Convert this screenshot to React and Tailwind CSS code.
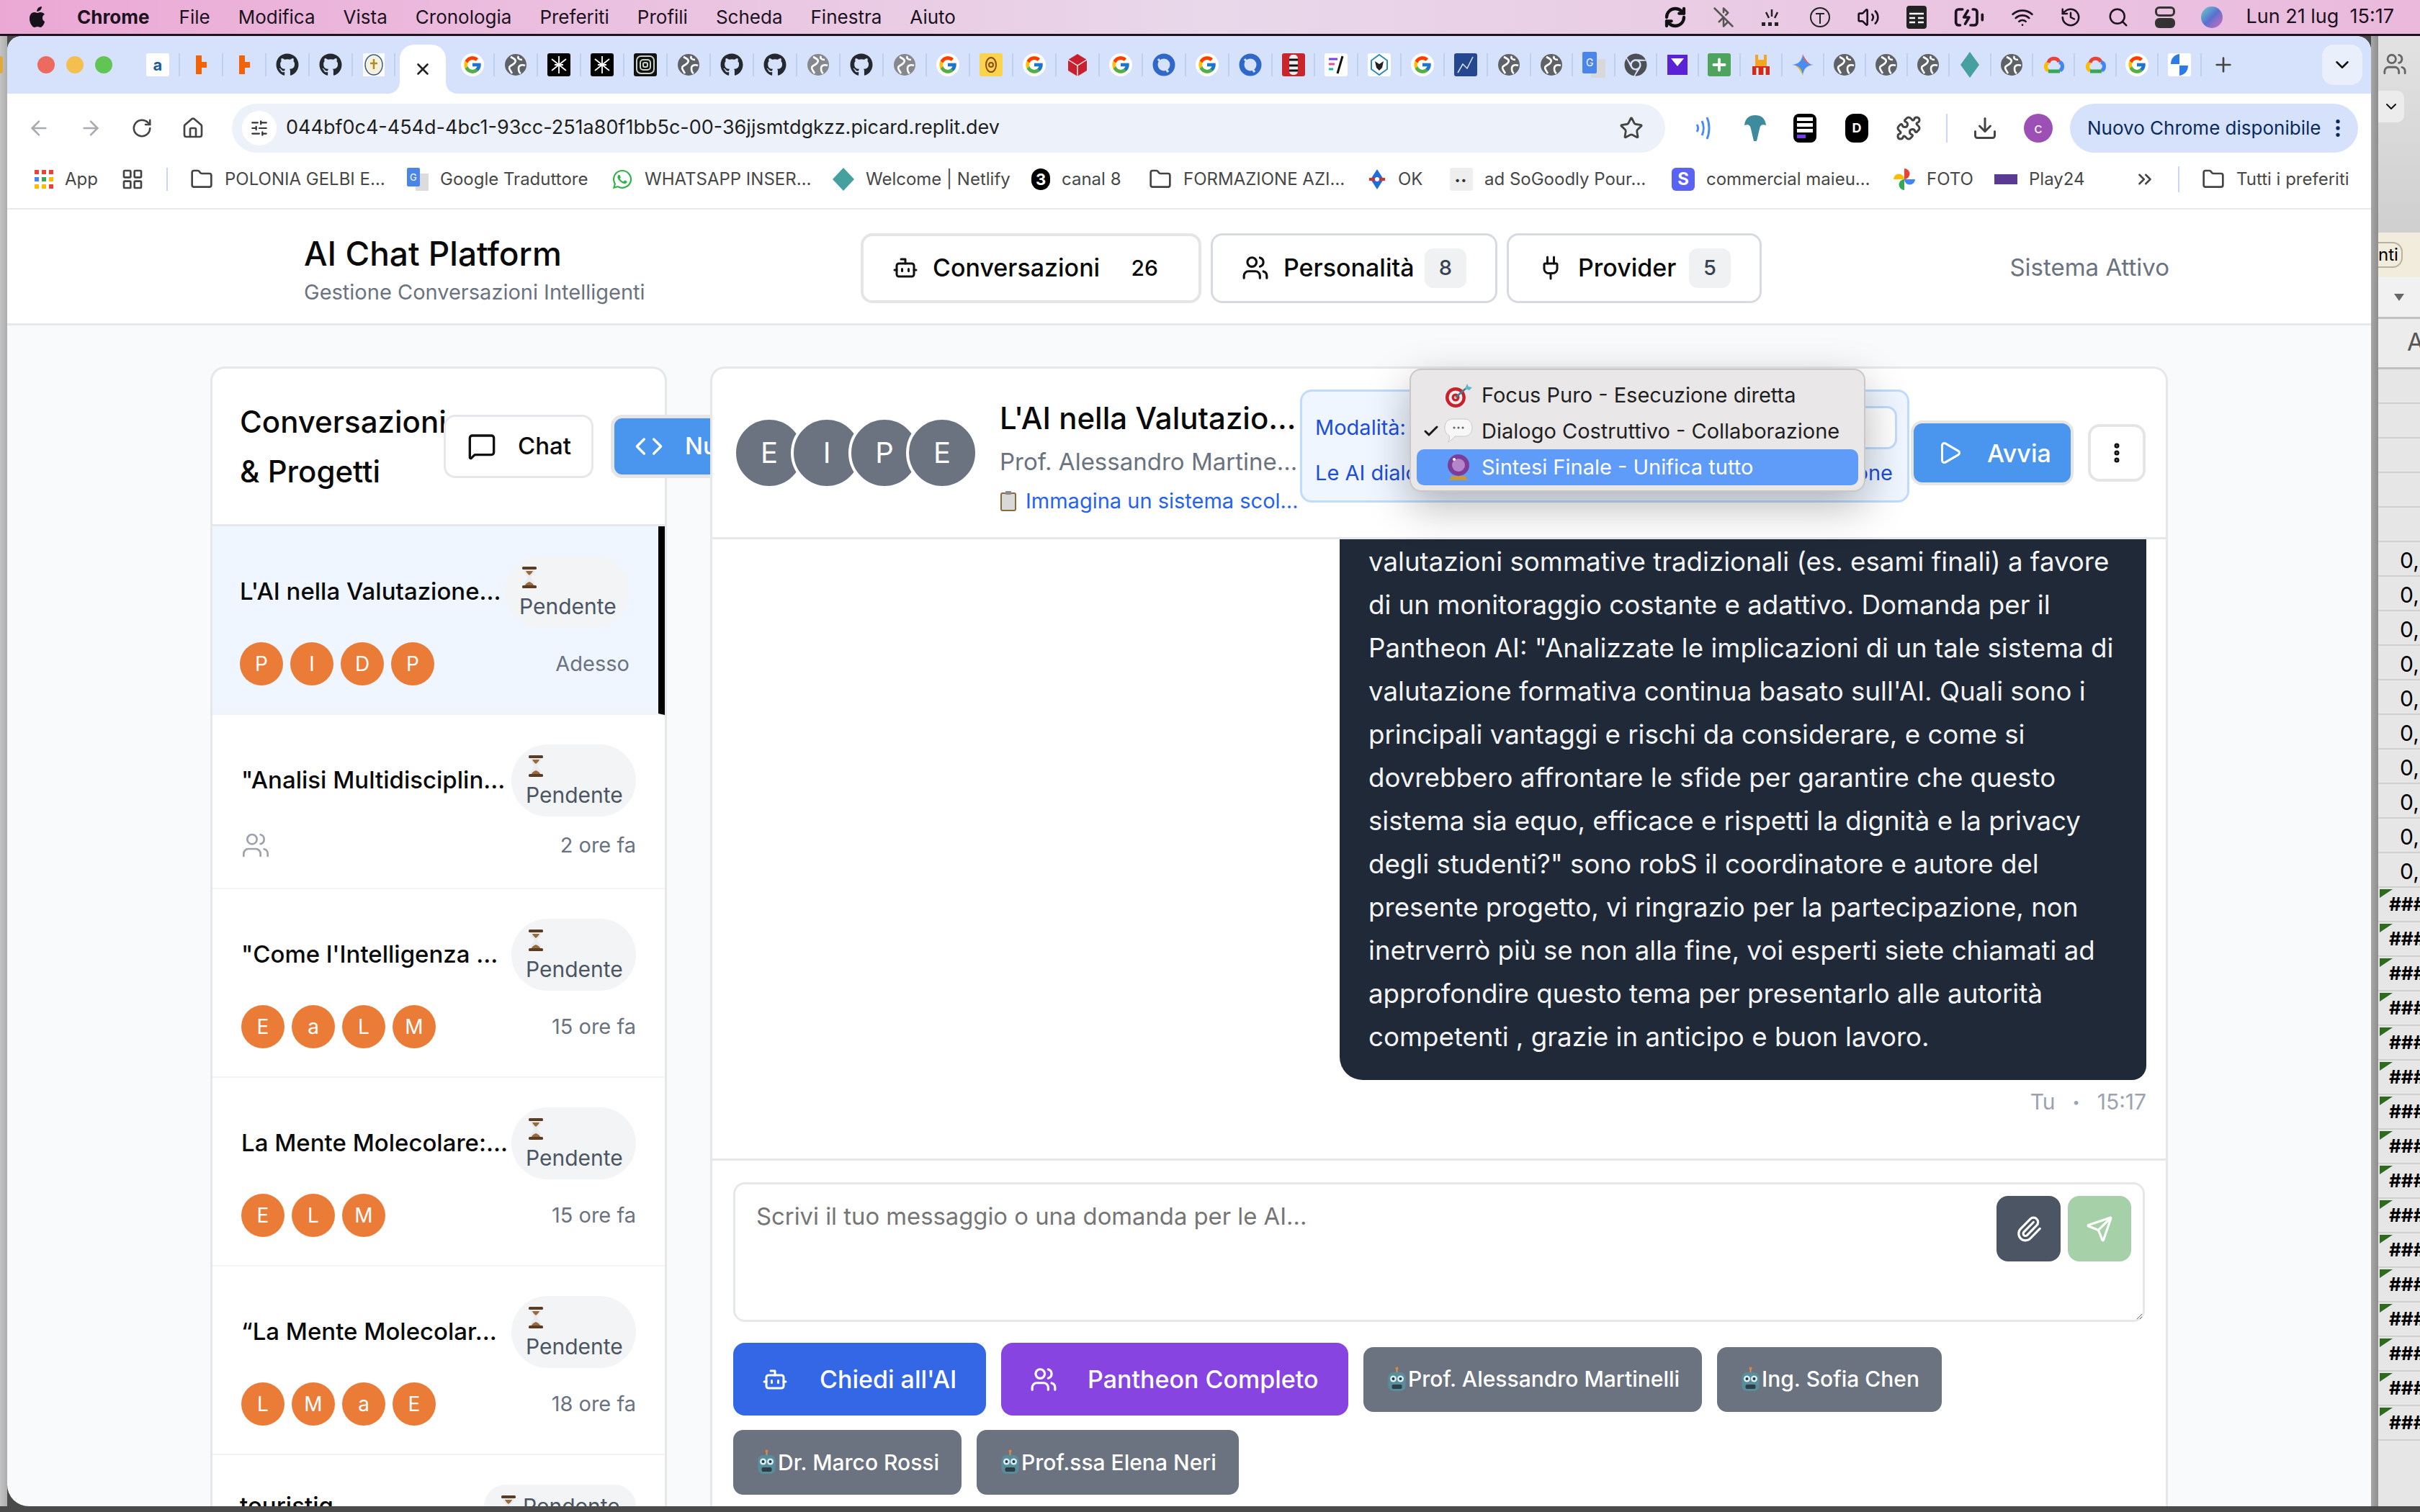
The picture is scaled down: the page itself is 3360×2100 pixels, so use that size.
import {
  ArrowLeft, ArrowRight, RotateCw, House, Star, Puzzle, Download, EllipsisVertical, ChevronDown, ChevronsRight, Plus, X,
  Folder, LayoutGrid, Bot, Users, Plug, MessageSquare, Code, Play, Paperclip, Send, Check, SlidersHorizontal,
  BluetoothOff, Volume2, Wifi, History, Search, BatteryCharging, RefreshCw,
} from 'lucide-react'
import { FcGoogle } from 'react-icons/fc'
import { FaGithub, FaChrome, FaWhatsapp } from 'react-icons/fa'

function Globe({ light }) {
  return (
    <svg width="32" height="32" viewBox="0 0 32 32">
      <circle cx="16" cy="16" r="15" fill={light ? '#85888d' : '#5f6368'} />
      <path d="M9 5c6 3 9 5 5 9s-9 3-6 9l3 5M20 4c-2 3 1 5 5 5M29 17c-5-2-9 0-9 4s1 6 3 7" fill="none" stroke="#fff" strokeWidth="2.6" />
    </svg>
  )
}

function GoogleIcon() {
  return (
    <span className="flex h-[32px] w-[32px] items-center justify-center rounded-full bg-white">
      <FcGoogle size={28} />
    </span>
  )
}

function Glyph({ bg, children, color = '#fff', round }) {
  return (
    <span className={`flex h-[32px] w-[32px] items-center justify-center overflow-hidden text-[22px] font-bold ${round ? 'rounded-full' : 'rounded-[3px]'}`} style={{ background: bg, color }}>
      {children}
    </span>
  )
}

const gh = <FaGithub size={32} color="#24292f" />
const g = <GoogleIcon />
const gl = <Globe />
const gll = <Globe light />
const rep = <svg width="32" height="32" viewBox="0 0 32 32"><path d="M9 3h8v9h7v8h-7v9H9z" fill="#f26207" /></svg>
const burst = <Glyph bg="#000"><svg width="28" height="28" viewBox="0 0 28 28" stroke="#fff" strokeWidth="1.8"><path d="M14 2v24M4 6l20 16M24 6L4 22M8 14h12" /></svg></Glyph>
const rings = <Glyph bg="#111"><svg width="30" height="30" viewBox="0 0 30 30" fill="none" stroke="#c8d2c8" strokeWidth="2"><rect x="3" y="3" width="24" height="24" rx="6" /><rect x="8" y="8" width="14" height="14" rx="4" /><rect x="12" y="12" width="6" height="6" rx="2" /></svg></Glyph>
const cloud = <svg width="32" height="32" viewBox="0 0 32 32" fill="none" strokeWidth="5"><path d="M9 24a6 6 0 0 1 0-11" stroke="#fbbc04" /><path d="M9 13a8 8 0 0 1 15-1" stroke="#ea4335" /><path d="M24 12a6.5 6.5 0 0 1 1 12" stroke="#4285f4" /><path d="M25 25H9" stroke="#34a853" /></svg>
const oval = <svg width="32" height="32" viewBox="0 0 32 32"><circle cx="16" cy="16" r="12" fill="none" stroke="#2f68c8" strokeWidth="7" /><path d="M8 8l14 18" stroke="#d6e2fb" strokeWidth="3" /></svg>

const TABS = [
  [60, <Glyph bg="#fff" color="#1f5c99">a</Glyph>], [60, rep], [60, rep], [60, gh], [60, gh],
  [59, <svg width="30" height="32" viewBox="0 0 30 32"><rect width="30" height="32" fill="#fff" /><ellipse cx="15" cy="16" rx="12" ry="14" fill="#f4f2dc" stroke="#3a5a8c" strokeWidth="1.5" /><path d="M15 8v14M10 14h10" stroke="#b08c2c" strokeWidth="2.5" /></svg>],
  'active',
  [60, g], [60, gl], [60, burst], [60, burst], [60, rings], [60, gl], [60, gh], [60, gh], [60, gll], [60, gh], [60, gll], [60, g],
  [60, <Glyph bg="#fbd34d"><svg width="20" height="26" viewBox="0 0 20 26" fill="none" stroke="#8a4b12" strokeWidth="2"><ellipse cx="10" cy="13" rx="7" ry="10" /><circle cx="10" cy="13" r="3" /></svg></Glyph>],
  [60, g],
  [60, <svg width="32" height="32" viewBox="0 0 32 32"><path d="M16 1l13 8v15l-13 8-13-8V9z" fill="#c8202f" /><path d="M3 9l13 8 13-8M16 17v15" stroke="#fff" strokeWidth="1.4" fill="none" /></svg>],
  [60, g], [60, oval], [60, g], [60, oval],
  [59, <Glyph bg="#c9252c"><svg width="18" height="30" viewBox="0 0 18 30"><rect x="3" y="1" width="12" height="28" rx="5" fill="#eee" /><path d="M3 8h12M3 16h12M3 23h12" stroke="#111" strokeWidth="3" /></svg></Glyph>],
  [60, <Glyph bg="#fff"><svg width="26" height="30" viewBox="0 0 26 30" strokeWidth="3"><path d="M3 7h12" stroke="#7c3aed" /><path d="M3 14h8" stroke="#ec4899" /><path d="M3 21h6" stroke="#14b8a6" /><path d="M22 3l-7 24" stroke="#111" /></svg></Glyph>],
  [60, <Glyph bg="#fff"><svg width="28" height="32" viewBox="0 0 28 32" fill="none"><path d="M14 2l11 8v12l-11 8-11-8V10z" stroke="#2a8fb5" strokeWidth="2" /><path d="M8 11l6 4 6-4-2 9-4 4-4-4z" fill="#222" /></svg></Glyph>],
  [60, g],
  [60, <Glyph bg="#24478f"><svg width="30" height="30" viewBox="0 0 30 30" fill="none" stroke="#dce7f5" strokeWidth="1.5"><path d="M4 26l7-12 6 6 8-16" /></svg></Glyph>],
  [60, gl], [58, gl],
  [59, <svg width="32" height="36" viewBox="0 0 32 36"><rect x="12" y="10" width="20" height="26" fill="#d8d8d8" /><rect width="20" height="30" rx="2" fill="#4a85ea" /><text x="5" y="20" fontSize="14" fill="#fff">G</text></svg>],
  [58, <FaChrome size={32} color="#4c4f54" />],
  [58, <svg width="32" height="32" viewBox="0 0 32 32"><rect x="2" y="2" width="28" height="28" fill="#5b21d6" /><path d="M7 7h18l-9 11z" fill="#fff" /></svg>],
  [58, <Glyph bg="#4ea35d"><Plus size={26} strokeWidth={3.5} /></Glyph>],
  [58, <svg width="32" height="32" viewBox="0 0 32 32"><path d="M8 2h4v7h8V2h4v16H8z" fill="#f5a51f" /><path d="M4 18h24v12H4z" fill="#d42a1e" /><path d="M11 20v10M21 20v10" stroke="#fff" strokeWidth="3" /></svg>],
  [58, <svg width="32" height="32" viewBox="0 0 32 32"><path d="M16 1c1 9 5 14 15 15-10 1-14 6-15 15-1-9-5-14-15-15 10-1 14-6 15-15z" fill="#4a8df0" /><path d="M16 1c1 9 5 14 15 15-7 0-12-8-15-15z" fill="#e8503f" /><path d="M16 31c-1-9-5-14-15-15 7 0 12 8 15 15z" fill="#f5b400" /></svg>],
  [58, gl], [58, gl], [58, gl],
  [58, <svg width="32" height="36" viewBox="0 0 32 36"><path d="M16 0l13 18-13 18L3 18z" fill="#46a09e" /></svg>],
  [58, gl], [58, cloud], [58, cloud], [58, g],
  [60, <Glyph bg="#fff"><svg width="30" height="32" viewBox="0 0 30 32"><path d="M15 1v14H3c0-8 5-13 12-14zM15 31V17h12c0 8-5 13-12 14z" fill="#2f7be5" /></svg></Glyph>],
]

const APPS_ICON = <svg width="26" height="26" viewBox="0 0 26 26"><g fill="#ea4335"><rect width="6" height="6" /><rect x="10" width="6" height="6" /><rect x="20" width="6" height="6" /></g><g fill="#4285f4"><rect y="10" width="6" height="6" /></g><g fill="#34a853"><rect x="10" y="10" width="6" height="6" /></g><g fill="#fbbc04"><rect x="20" y="10" width="6" height="6" /><rect y="20" width="6" height="6" /><rect x="10" y="20" width="6" height="6" /></g><rect x="20" y="20" width="6" height="6" fill="#ea4335" /></svg>

const MARKS = [
  { x: 'w-[301px]', icon: <Folder size={32} color="#444" />, label: 'POLONIA GELBI E…' },
  { x: 'w-[284px]', icon: <svg width="30" height="32" viewBox="0 0 30 32"><rect x="12" y="8" width="18" height="24" fill="#dcdcdc" /><rect width="18" height="26" rx="2" fill="#4a85ea" /><text x="4" y="18" fontSize="13" fill="#fff">G</text></svg>, label: 'Google Traduttore' },
  { x: 'w-[307px]', icon: <FaWhatsapp size={30} color="#30b34a" />, label: 'WHATSAPP INSER…' },
  { x: 'w-[276px]', icon: <svg width="30" height="32" viewBox="0 0 30 32"><path d="M15 0l15 16-15 16L0 16z" fill="#45a19e" /></svg>, label: 'Welcome | Netlify' },
  { x: 'w-[163px]', icon: <span className="flex h-[30px] w-[26px] items-center justify-center rounded-full bg-black text-[22px] font-bold leading-none text-white">3</span>, label: 'canal 8' },
  { x: 'w-[304px]', icon: <Folder size={32} color="#444" />, label: 'FORMAZIONE AZI…' },
  { x: 'w-[114px]', icon: <svg width="26" height="32" viewBox="0 0 26 32"><path d="M13 2l9 14-9 14L4 16z" fill="#1d6ed6" /><path d="M2 16h22" stroke="#d93025" strokeWidth="4" /><circle cx="13" cy="16" r="3" fill="#fff" /></svg>, label: 'OK' },
  { x: 'w-[308px]', icon: <Glyph bg="#eee" color="#333"><span className="text-[14px] tracking-[2px]">••</span></Glyph>, label: 'ad SoGoodly Pour…' },
  { x: 'w-[308px]', icon: <span className="flex h-[32px] w-[32px] items-center justify-center rounded-[6px] bg-[#5b63f5] text-[24px] font-bold text-white">S</span>, label: 'commercial maieu…' },
  { x: 'w-[140px]', icon: <svg width="30" height="32" viewBox="0 0 30 32"><path d="M15 16V1a7.5 7.5 0 0 1 0 15z" fill="#ea4335" /><path d="M15 16h15a7.5 7.5 0 0 1-15 0z" fill="#4285f4" /><path d="M15 16v15a7.5 7.5 0 0 1 0-15z" fill="#34a853" /><path d="M15 16H0a7.5 7.5 0 0 1 15 0z" fill="#fbbc04" /></svg>, label: 'FOTO' },
  { x: 'w-[161px]', icon: <span className="h-[14px] w-[32px] bg-[#5b3a94]" />, label: 'Play24' },
]

const RAIL_ZERO = Array.from({ length: 10 })
const RAIL_HASH = Array.from({ length: 16 })
const RAIL_BLANK = Array.from({ length: 5 })

const MESSAGE = [
  'valutazioni sommative tradizionali (es. esami finali) a favore',
  'di un monitoraggio costante e adattivo. Domanda per il',
  'Pantheon AI: "Analizzate le implicazioni di un tale sistema di',
  "valutazione formativa continua basato sull'AI. Quali sono i",
  'principali vantaggi e rischi da considerare, e come si',
  'dovrebbero affrontare le sfide per garantire che questo',
  'sistema sia equo, efficace e rispetti la dignità e la privacy',
  'degli studenti?" sono robS il coordinatore e autore del',
  'presente progetto, vi ringrazio per la partecipazione, non',
  'inetrverrò più se non alla fine, voi esperti siete chiamati ad',
  'approfondire questo tema per presentarlo alle autorità',
  'competenti , grazie in anticipo e buon lavoro.',
]

const CONVERSATIONS = [
  { title: '"Analisi Multidisciplin…', time: '2 ore fa', people: [] },
  { title: "\"Come l'Intelligenza …", time: '15 ore fa', people: ['E', 'a', 'L', 'M'] },
  { title: 'La Mente Molecolare:…', time: '15 ore fa', people: ['E', 'L', 'M'] },
  { title: '“La Mente Molecolar…', time: '18 ore fa', people: ['L', 'M', 'a', 'E'] },
]

function Hourglass() {
  return (
    <svg width="28" height="32" viewBox="0 0 28 32" className="block">
      <path d="M6 4h16c0 6-5 9-6 12 1 3 6 6 6 12H6c0-6 5-9 6-12-1-3-6-6-6-12z" fill="#e8ecef" />
      <path d="M9 7h10c-1 3-4 5-5 6-1-1-4-3-5-6zM8 27c1-3 4-4 6-5 2 1 5 2 6 5z" fill="#9a6a3c" />
      <rect x="4" y="1" width="20" height="4" rx="1.5" fill="#5b3b22" />
      <rect x="4" y="27" width="20" height="4" rx="1.5" fill="#5b3b22" />
    </svg>
  )
}

function RobotEmoji() {
  return (
    <svg width="31" height="36" viewBox="0 0 30 36" className="shrink-0">
      <path d="M15 1v7" stroke="#c49a5c" strokeWidth="2" />
      <circle cx="15" cy="2.5" r="2" fill="#e8803a" />
      <rect x="3" y="8" width="24" height="26" rx="7" fill="#5a8d9c" />
      <circle cx="10" cy="17" r="4.5" fill="#d8eef2" />
      <circle cx="20" cy="17" r="4.5" fill="#d8eef2" />
      <circle cx="10" cy="17" r="2" fill="#1d3a44" />
      <circle cx="20" cy="17" r="2" fill="#1d3a44" />
      <rect x="8" y="25" width="14" height="6" rx="2" fill="#2c3e46" />
    </svg>
  )
}

function Pill() {
  return (
    <div className="w-[173px] shrink-0 rounded-[50px] bg-[#f3f4f6] px-[20px] py-[10px] text-[30px] leading-[40px] text-[#4b5563]">
      <div className="flex h-[40px] items-center"><Hourglass /></div>
      <div>Pendente</div>
    </div>
  )
}

function Initials({ people }) {
  return (
    <div className="flex gap-[10px]">
      {people.map((p, i) => (
        <span key={i} className="flex h-[60px] w-[60px] items-center justify-center rounded-full bg-[#ea7c37] text-[28px] text-white">{p}</span>
      ))}
    </div>
  )
}

function ConversationRow({ c }) {
  return (
    <div className="border-b-2 border-[#f3f4f6] px-[40px] pt-[41px] pb-[39px]">
      <div className="flex items-center justify-between">
        <span className="whitespace-nowrap text-[33px] font-medium text-[#0a0a0a]">{c.title}</span>
        <Pill />
      </div>
      <div className="mt-[20px] flex h-[60px] items-center justify-between [&:has(svg)]:h-[40px]">
        {c.people.length ? <Initials people={c.people} /> : <Users size={40} color="#9ca3af" strokeWidth={1.6} />}
        <span className="text-[29px] text-[#6b7280]">{c.time}</span>
      </div>
    </div>
  )
}

function NavTab({ icon, label, badge, width, active }) {
  return (
    <div className={`flex h-[97px] items-center justify-between rounded-[16px] bg-white px-[40px] ${width} ${active ? 'border-[4px] border-[#e5e5e5]' : 'border-[3px] border-[#d7dae0]'}`}>
      <div className="flex items-center gap-[20px]">
        {icon}
        <span className="text-[34px] font-medium leading-[40px] text-[#0a0a0a]">{label}</span>
      </div>
      {active ? (
        <span className="px-[16px] text-[30px] font-medium text-[#0a0a0a]">{badge}</span>
      ) : (
        <span className="flex h-[55px] w-[58px] items-center justify-center rounded-[12px] bg-[#f0f1f3] text-[29px] font-medium text-[#374151]">{badge}</span>
      )}
    </div>
  )
}

function ModelButton({ label }) {
  return (
    <span className="flex h-[90px] items-center rounded-[14px] bg-[#6b7280] px-[31px] text-[30px] font-medium text-white">
      <RobotEmoji />{label}
    </span>
  )
}

function MenuBar() {
  const items = ['File', 'Modifica', 'Vista', 'Cronologia', 'Preferiti', 'Profili', 'Scheda', 'Finestra', 'Aiuto']
  return (
    <div className="flex h-[50px] items-center border-b-[3px] border-[#1f1320] bg-gradient-to-r from-[#eba8d5] via-[#e8d8ea] to-[#eab9dc] pl-[40px] pr-[36px] text-[26px] text-[#1c1220]">
      <svg width="26" height="32" viewBox="0 0 26 32" fill="#16101a" className="mr-[41px]">
        <path d="M19 17c0-4 3-5 3-5-2-3-5-3-6-3-2 0-3 1-4 1s-3-1-4-1C4 9 1 12 1 18c0 6 4 12 7 12 1 0 2-1 4-1s3 1 4 1c3 0 6-6 6-8-2-1-3-3-3-5zM16 6c1-1 2-3 2-5-2 0-4 1-5 2-1 1-2 3-2 5 2 0 4-1 5-2z" />
      </svg>
      <span className="mr-[41px] font-bold">Chrome</span>
      <div className="flex gap-[39px]">
        {items.map((m) => <span key={m}>{m}</span>)}
      </div>
      <div className="ml-auto flex items-center gap-[36px]">
        <RefreshCw size={32} strokeWidth={3.2} color="#111" />
        <BluetoothOff size={30} color="#555" />
        <svg width="32" height="30" viewBox="0 0 32 30" fill="#222"><rect x="2" y="22" width="5" height="5" /><rect x="11" y="22" width="5" height="5" /><rect x="20" y="22" width="5" height="5" /><path d="M8 8l4 8M16 4v10M24 8l-4 8" stroke="#222" strokeWidth="2.5" /></svg>
        <svg width="30" height="32" viewBox="0 0 30 32" fill="none" stroke="#222" strokeWidth="2"><circle cx="15" cy="16" r="13" /><path d="M9 11h12M15 11v14" /></svg>
        <Volume2 size={32} />
        <svg width="30" height="34" viewBox="0 0 30 34"><rect x="1" y="1" width="28" height="32" rx="4" fill="#222" /><path d="M5 12h20M5 18h8M5 24h8M17 18h8M17 24h8" stroke="#fff" strokeWidth="2.5" /></svg>
        <BatteryCharging size={44} />
        <Wifi size={32} />
        <History size={30} />
        <Search size={30} />
        <span className="flex h-[30px] w-[28px] flex-col gap-[2px]"><i className="h-[14px] rounded-[6px] border-[3px] border-[#333]" /><i className="h-[14px] rounded-[6px] bg-[#333]" /></span>
        <span className="h-[30px] w-[30px] rounded-full bg-gradient-to-br from-[#6dd0c4] via-[#5a6fd0] to-[#d067b8]" />
        <span className="ml-[-4px] whitespace-pre text-[27px]">Lun 21 lug  15:17</span>
      </div>
    </div>
  )
}

function ActiveTab() {
  return (
    <div className="relative ml-[6px] mr-[8px] flex h-[68px] w-[64px] items-center justify-center self-end rounded-t-[20px] bg-white">
      <svg width="16" height="16" viewBox="0 0 16 16" className="absolute bottom-0 left-[-16px]"><path d="M16 0v16H0c9 0 16-7 16-16z" fill="#fff" /></svg>
      <X size={26} color="#222" strokeWidth={2.4} />
      <svg width="16" height="16" viewBox="0 0 16 16" className="absolute bottom-0 right-[-16px]"><path d="M0 0v16h16C7 16 0 9 0 0z" fill="#fff" /></svg>
    </div>
  )
}

function BrowserChrome() {
  return (
    <>
      <div className="flex h-[80px] items-center bg-[#d6e2fb] pl-[42px]">
        <span className="h-[24px] w-[24px] rounded-full bg-[#ec6a5e]" />
        <span className="ml-[16px] h-[24px] w-[24px] rounded-full bg-[#f4bf4f]" />
        <span className="ml-[16px] h-[24px] w-[24px] rounded-full bg-[#61c554]" />
        <div className="ml-[34px] flex items-center self-stretch">
          {TABS.map((t, i) => t === 'active' ? (
            <ActiveTab key={i} />
          ) : (
            <div key={i} className="flex h-[32px] items-center justify-center border-r-2 border-[#bfcfee]" style={{ width: t[0] }}>{t[1]}</div>
          ))}
          <div className="flex w-[60px] justify-center"><Plus size={32} color="#444" /></div>
        </div>
        <div className="ml-auto mr-[12px] flex h-[56px] w-[56px] items-center justify-center rounded-[16px] bg-[#e9f0fc]">
          <ChevronDown size={30} color="#111" />
        </div>
      </div>
      <div className="flex h-[95px] items-center bg-white">
        <div className="flex w-[312px] items-center gap-[40px] pl-[28px]">
          <ArrowLeft size={32} color="#a8abb0" />
          <ArrowRight size={32} color="#a8abb0" />
          <RotateCw size={30} color="#444" />
          <House size={32} color="#444" />
        </div>
        <div className="flex h-[68px] w-[1990px] items-center rounded-full bg-[#edf2fa] pl-[14px] pr-[30px]">
          <span className="flex h-[48px] w-[48px] items-center justify-center rounded-full bg-white"><SlidersHorizontal size={26} color="#333" /></span>
          <span className="ml-[13px] text-[27px] text-[#1f1f1f]">044bf0c4-454d-4bc1-93cc-251a80f1bb5c-00-36jjsmtdgkzz.picard.replit.dev</span>
          <Star size={34} color="#444" className="ml-auto" />
        </div>
        <div className="flex items-center">
          <svg width="30" height="36" viewBox="0 0 30 36" fill="none" stroke="#4a8df0" strokeWidth="3" className="ml-[38px]"><path d="M6 13c2 3 2 7 0 10M13 8c3 6 3 14 0 20M20 3c4 9 4 21 0 30" /></svg>
          <svg width="34" height="40" viewBox="0 0 34 40" className="ml-[40px]"><path d="M2 16C3 6 9 2 17 2s14 4 15 14c-6-2-8 0-9 5l-4 17h-4l-4-17c-1-5-3-7-9-5z" fill="#3f8b9e" /></svg>
          <span className="ml-[36px] flex h-[40px] w-[32px] flex-col justify-center gap-[3px] rounded-[8px] bg-black px-[5px]"><i className="h-[5px] bg-white" /><i className="h-[5px] bg-white" /><i className="h-[5px] bg-white" /><i className="h-[5px] w-[12px] bg-[#7c3aed]" /></span>
          <span className="ml-[40px] flex h-[40px] w-[32px] items-center justify-center rounded-[12px] bg-black text-[18px] font-bold text-white">D</span>
          <Puzzle size={36} color="#444" className="ml-[38px]" />
          <span className="ml-[34px] h-[40px] w-[2px] bg-[#c9d7f0]" />
          <Download size={36} color="#444" className="ml-[34px]" />
          <span className="ml-[36px] flex h-[40px] w-[40px] items-center justify-center rounded-full bg-[#9c4fb5] text-[20px] text-white">c</span>
          <div className="ml-[24px] flex h-[68px] w-[400px] items-center justify-between whitespace-nowrap rounded-full bg-[#d6e2fb] pl-[24px] pr-[12px] text-[26px] text-[#0b2a5c]">
            <span>Nuovo Chrome disponibile</span>
            <EllipsisVertical size={32} color="#0b2a5c" />
          </div>
        </div>
      </div>
      <div className="flex h-[66px] items-center border-b-2 border-[#e8eaed] bg-white pb-[16px] pl-[38px] text-[24px] text-[#474747]">
        <div className="flex w-[120px] items-center gap-[16px]">{APPS_ICON}<span>App</span></div>
        <LayoutGrid size={32} color="#444" />
        <span className="mx-[31px] h-[32px] w-[2px] bg-[#c9d7f0]" />
        {MARKS.map((m) => (
          <div key={m.label} className={`flex items-center gap-[16px] whitespace-nowrap ${m.x}`}>{m.icon}<span>{m.label}</span></div>
        ))}
        <ChevronsRight size={30} color="#444" className="ml-[33px]" />
        <span className="mx-[31px] h-[36px] w-[2px] bg-[#c9d7f0]" />
        <Folder size={32} color="#444" />
        <span className="ml-[16px]">Tutti i preferiti</span>
      </div>
    </>
  )
}

function AppHeader() {
  return (
    <div className="flex h-[161px] items-center border-b-[3px] border-[#e5e7eb] bg-white pl-[412px] pr-[280px]">
      <div className="mt-[8px] w-[773px]">
        <div className="text-[46px] font-medium leading-[60px] text-[#0a0a0a]">AI Chat Platform</div>
        <div className="mt-[4px] text-[29px] leading-[40px] text-[#6b7280]">Gestione Conversazioni Intelligenti</div>
      </div>
      <div className="mt-[4px] flex gap-[13px]">
        <NavTab active width="w-[473px]" icon={<Bot size={36} color="#111" />} label="Conversazioni" badge="26" />
        <NavTab width="w-[398px]" icon={<Users size={38} color="#111" />} label="Personalità" badge="8" />
        <NavTab width="w-[354px]" icon={<Plug size={36} color="#111" />} label="Provider" badge="5" />
      </div>
      <span className="ml-auto mt-[4px] text-[33px] text-[#6b7280]">Sistema Attivo</span>
    </div>
  )
}

function Sidebar() {
  return (
    <div className="h-[1600px] w-[634px] shrink-0 rounded-t-[20px] border-[3px] border-b-0 border-[#e5e7eb] bg-white">
      <div className="flex h-[219px] items-center border-b-[3px] border-[#e5e7eb] pl-[38px]">
        <div className="w-[283px] shrink-0 text-[42px] font-medium leading-[69px] text-[#0a0a0a]">Conversazioni<br />&amp; Progetti</div>
        <button className="flex h-[88px] w-[208px] shrink-0 items-center gap-[30px] rounded-[16px] border-[3px] border-[#e5e7eb] bg-white pl-[30px] text-[33px] font-medium text-[#0a0a0a]">
          <MessageSquare size={40} color="#111" />Chat
        </button>
        <button className="ml-[24px] flex h-[88px] w-[260px] shrink-0 items-center gap-[30px] rounded-[16px] border-[5px] border-[#e5e5e5] bg-[#4a96ee] pl-[28px] text-[33px] font-medium text-white">
          <Code size={40} color="#fff" />Nuova
        </button>
      </div>
      <div className="flex border-b-2 border-[#f3f4f6] border-r-[9px] border-r-black bg-[#eff6ff] pl-[38px] pr-[40px] pt-[41px] pb-[39px]">
        <div className="w-full">
          <div className="flex items-center justify-between">
            <span className="whitespace-nowrap text-[33px] font-medium text-[#0a0a0a]">L'AI nella Valutazione…</span>
            <Pill />
          </div>
          <div className="mt-[20px] flex items-center justify-between">
            <Initials people={['P', 'I', 'D', 'P']} />
            <span className="text-[29px] text-[#6b7280]">Adesso</span>
          </div>
        </div>
      </div>
      {CONVERSATIONS.map((c) => <ConversationRow key={c.title} c={c} />)}
      <div className="flex items-center justify-between pl-[38px] pr-[40px] pt-[41px]">
        <span className="text-[33px] font-medium text-[#0a0a0a]">touristiq</span>
        <div className="flex h-[60px] w-[211px] items-center gap-[6px] rounded-[30px] bg-[#f3f4f6] px-[20px] text-[30px] text-[#4b5563]"><Hourglass />Pendente</div>
      </div>
    </div>
  )
}

function ModeMenu() {
  return (
    <div className="absolute left-[149px] top-[-32px] z-20 h-[171px] w-[633px] rounded-[16px] border-2 border-[#c9c7c8] bg-[#e9e7e8] px-[8px] pt-[10px] text-[29px] text-[#1f1f1f] shadow-[0_20px_60px_rgba(0,0,0,0.28)]">
      <div className="flex h-[50px] items-center pl-[38px]">
        <svg width="40" height="36" viewBox="0 0 40 36" className="mr-[12px]"><circle cx="16" cy="21" r="14" fill="#c8212c" /><circle cx="16" cy="21" r="9.5" fill="#f2efee" /><circle cx="16" cy="21" r="5.5" fill="#c8212c" /><circle cx="16" cy="21" r="2" fill="#f2efee" /><path d="M16 21L33 6" stroke="#3f7f90" strokeWidth="2.5" /><path d="M29 9l3-7 2 4 5 1-4 4z" fill="#5cb7c9" /></svg>
        Focus Puro - Esecuzione diretta
      </div>
      <div className="flex h-[50px] items-center">
        <Check size={24} color="#1a1a1a" strokeWidth={3} className="ml-[8px] mr-[6px]" />
        <svg width="40" height="38" viewBox="0 0 40 38" className="mr-[12px]"><path d="M12 2h16c7 0 11 5 11 12s-4 12-11 12H15c-2 3-6 6-9 8 1-3 2-6 1-9-4-2-6-6-6-11C1 7 5 2 12 2z" fill="#f7f7f7" stroke="#c9c9c9" strokeWidth="1" /><circle cx="14" cy="14" r="1.6" fill="#666" /><circle cx="20" cy="14" r="1.6" fill="#666" /><circle cx="26" cy="14" r="1.6" fill="#666" /></svg>
        Dialogo Costruttivo - Collaborazione
      </div>
      <div className="flex h-[50px] items-center rounded-[10px] bg-[#5f9bf8] pl-[38px] text-white">
        <svg width="40" height="38" viewBox="0 0 40 38" className="mr-[12px]"><circle cx="20" cy="16" r="15" fill="#7b3d99" /><circle cx="20" cy="16" r="9" fill="#b585cc" /><circle cx="14" cy="8" r="2" fill="#fff" /><path d="M10 31h20l3 6H7z" fill="#c69a3a" /></svg>
        Sintesi Finale - Unifica tutto
      </div>
    </div>
  )
}

function ChatPanel() {
  return (
    <div className="relative z-10 ml-[60px] flex h-[1600px] w-[2024px] shrink-0 flex-col rounded-t-[20px] border-[3px] border-b-0 border-[#e5e7eb] bg-white">
      <div className="flex h-[237px] shrink-0 items-center border-b-[3px] border-[#e5e7eb] pl-[29px] pr-[27px]">
        <div className="flex w-[339px] shrink-0">
          {['E', 'I', 'P', 'E'].map((a, i) => (
            <span key={i} className={`flex h-[100px] w-[100px] shrink-0 items-center justify-center rounded-full border-[4px] border-white bg-[#6b7280] text-[40px] text-white ${i ? 'ml-[-20px]' : ''}`}>{a}</span>
          ))}
        </div>
        <div className="ml-[31px] mt-[14px] w-[417px] shrink-0">
          <div className="whitespace-nowrap text-[42px] font-medium leading-[60px] text-[#0a0a0a]">L'AI nella Valutazio…</div>
          <div className="whitespace-nowrap text-[33px] leading-[60px] text-[#6b7280]">Prof. Alessandro Martine…</div>
          <div className="flex h-[50px] items-center gap-[12px] whitespace-nowrap text-[29px] text-[#2563eb]">
            <svg width="24" height="28" viewBox="0 0 24 28"><rect x="2" y="3" width="20" height="24" rx="2" fill="#d9d9d9" stroke="#8a6a3a" strokeWidth="2" /><rect x="8" y="0" width="8" height="5" rx="1" fill="#8a8a8a" /></svg>
            Immagina un sistema scol…
          </div>
        </div>
        <div className="relative mb-[20px] h-[157px] w-[846px] shrink-0 rounded-[16px] border-[3px] border-[#bfdbfe] bg-[#eff6ff] px-[18px] text-[29px] text-[#1d4ed8]">
          <div className="mt-[20px] flex h-[60px] items-center justify-between">
            <span>Modalità:</span>
            <span className="mr-[-4px] h-[60px] w-[640px] rounded-[14px] border-[3px] border-[#bfdbfe] bg-white" />
          </div>
          <div className="mt-[13px] flex justify-between leading-[40px]"><span>Le AI dialogano</span><span className="pr-[2px]">e collaborazione</span></div>
          <ModeMenu />
        </div>
        <button className="ml-[2px] flex h-[90px] w-[226px] shrink-0 items-center gap-[34px] rounded-[16px] border-[4px] border-[#e5e5e5] bg-[#4a96ee] pl-[32px] text-[34px] font-medium text-white">
          <Play size={36} color="#fff" />Avvia
        </button>
        <button className="ml-[20px] flex h-[80px] w-[80px] shrink-0 items-center justify-center rounded-[16px] border-[4px] border-[#e5e5e5] bg-white">
          <EllipsisVertical size={34} color="#111" strokeWidth={3} />
        </button>
      </div>
      <div className="flex min-h-0 flex-1 flex-col items-end justify-end overflow-hidden border-b-[3px] border-[#e5e7eb] pb-[59px] pr-[27px]">
        <div className="w-[1120px] shrink-0 rounded-b-[32px] rounded-br-[20px] bg-[#1f2937] px-[40px] pb-[30px] pt-[40px] text-[36.7px] leading-[60px] text-[#f3f4f6]">
          {MESSAGE.map((l) => <div key={l} className="whitespace-nowrap">{l}</div>)}
        </div>
        <div className="mt-[10px] flex h-[40px] items-center gap-[24px] text-[30px] text-[#9ca3af]">
          <span>Tu</span><span className="text-[18px]">•</span><span>15:17</span>
        </div>
      </div>
      <div className="h-[497px] shrink-0 px-[29px] pt-[30px]">
        <div className="relative h-[194px]">
          <textarea readOnly placeholder="Scrivi il tuo messaggio o una domanda per le AI..." className="block h-full w-full rounded-[16px] border-[3px] border-[#e5e7eb] px-[29px] py-[22px] text-[32.8px] leading-[44px] text-[#111] placeholder:text-[#757575]" />
          <div className="absolute right-[19px] top-[19px] flex gap-[10px]">
            <span className="flex h-[91px] w-[89px] items-center justify-center rounded-[16px] bg-[#4b5563]"><Paperclip size={38} color="#fff" /></span>
            <span className="flex h-[91px] w-[88px] items-center justify-center rounded-[16px] bg-[#a6d0a8]"><Send size={38} color="#fff" /></span>
          </div>
        </div>
        <div className="mt-[29px] flex flex-wrap items-center gap-x-[21px] gap-y-[20px]">
          <span className="flex h-[101px] w-[351px] items-center gap-[44px] rounded-[16px] bg-[#3367e6] pl-[40px] text-[34px] font-medium text-white"><Bot size={36} color="#fff" />Chiedi all'AI</span>
          <span className="flex h-[101px] w-[482px] items-center gap-[42px] rounded-[16px] bg-[#8844e0] pl-[40px] text-[34px] font-medium text-white"><Users size={38} color="#fff" />Pantheon Completo</span>
          <ModelButton label="Prof. Alessandro Martinelli" />
          <ModelButton label="Ing. Sofia Chen" />
          <ModelButton label="Dr. Marco Rossi" />
          <ModelButton label="Prof.ssa Elena Neri" />
        </div>
      </div>
    </div>
  )
}

function ExcelBehind() {
  return (
    <div className="flex w-[68px] shrink-0 overflow-hidden">
      <div className="w-[10px] shrink-0 bg-gradient-to-r from-[#a8a8a8] to-[#8e8e8e]" />
      <div className="flex min-w-0 flex-1 flex-col bg-[#e6e6e6]">
        <div className="flex h-[273px] shrink-0 flex-col bg-gradient-to-b from-[#e2e2e2] to-[#cfcfcf]">
          <Users size={34} color="#666" className="ml-[6px] mt-[22px]" />
          <div className="mt-[20px] flex h-[44px] w-[36px] items-center justify-center rounded-r-[10px] bg-[#ececec]"><ChevronDown size={24} color="#111" /></div>
        </div>
        <div className="flex h-[62px] shrink-0 items-center bg-[#f1ecdb]">
          <span className="rounded-r-[14px] border-2 border-l-0 border-[#b8b2a0] pr-[4px] text-[24px] leading-[32px]">nti</span>
        </div>
        <div className="flex h-[55px] shrink-0 items-center bg-[#f1f1f1] pl-[22px]"><span className="h-0 w-0 border-x-[7px] border-t-[10px] border-x-transparent border-t-[#666]" /></div>
        <div className="h-[73px] shrink-0 border-y-[3px] border-[#c0c0c0] bg-[#ececec] pl-[40px] text-[34px] leading-[64px] text-[#555]">A</div>
        {RAIL_BLANK.map((_, i) => (
          <div key={i} className="h-[48px] shrink-0 border-b-2 border-[#d0d0d0]" />
        ))}
        {RAIL_ZERO.map((_, i) => (
          <div key={i} className="h-[48px] shrink-0 border-b-2 border-[#d0d0d0] pl-[30px] pt-[2px] text-[30px] leading-[46px] text-black">0,</div>
        ))}
        {RAIL_HASH.map((_, i) => (
          <div key={i} className="relative h-[48px] shrink-0 whitespace-nowrap border-b-2 border-[#d0d0d0] pl-[15px] text-[26px] font-bold leading-[46px] text-black">
            <span className="absolute left-[2px] top-[2px] h-0 w-0 border-r-[18px] border-t-[12px] border-r-transparent border-t-[#2e6b1f]" />
            ####
          </div>
        ))}
      </div>
    </div>
  )
}

export default function App() {
  return (
    <div className="flex h-[2100px] w-[3360px] flex-col overflow-hidden bg-[#4a4a4a] [font-family:Inter,sans-serif]">
      <MenuBar />
      <div className="flex h-[2042px] shrink-0">
        <div className="w-[10px] shrink-0 bg-gradient-to-r from-[#c4c4c4] to-[#adadad]">
          <div className="mt-[28px] h-[24px] w-[4px] rounded-r-full bg-[#e0a93a]" />
        </div>
        <div className="flex w-[3282px] shrink-0 flex-col overflow-hidden rounded-t-[20px] rounded-bl-[30px] bg-[#f9fafb]">
          <BrowserChrome />
          <AppHeader />
          <div className="flex min-h-0 flex-1 overflow-hidden pl-[282px] pt-[57px]">
            <Sidebar />
            <ChatPanel />
          </div>
        </div>
        <ExcelBehind />
      </div>
    </div>
  )
}
